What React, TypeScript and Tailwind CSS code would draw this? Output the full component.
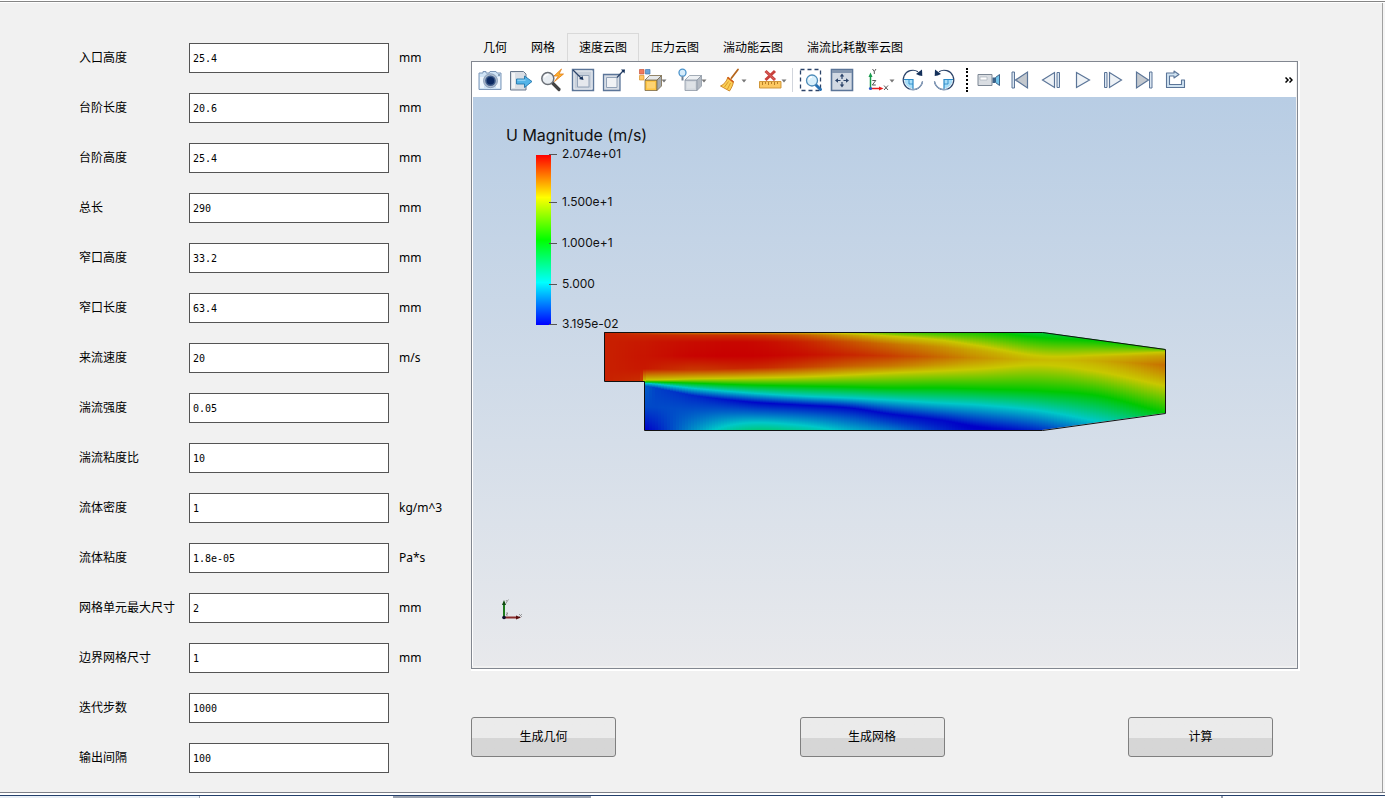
import { useState } from "react";
import type { ReactNode } from "react";
import clsx from "clsx";

const fields = [
  { id: "inlet-height", label: "入口高度", value: "25.4", unit: "mm" },
  { id: "step-length", label: "台阶长度", value: "20.6", unit: "mm" },
  { id: "step-height", label: "台阶高度", value: "25.4", unit: "mm" },
  { id: "total-length", label: "总长", value: "290", unit: "mm" },
  { id: "throat-height", label: "窄口高度", value: "33.2", unit: "mm" },
  { id: "throat-length", label: "窄口长度", value: "63.4", unit: "mm" },
  { id: "velocity", label: "来流速度", value: "20", unit: "m/s" },
  { id: "intensity", label: "湍流强度", value: "0.05", unit: "" },
  { id: "viscosity-ratio", label: "湍流粘度比", value: "10", unit: "" },
  { id: "density", label: "流体密度", value: "1", unit: "kg/m^3" },
  { id: "viscosity", label: "流体粘度", value: "1.8e-05", unit: "Pa*s" },
  { id: "max-cell", label: "网格单元最大尺寸", value: "2", unit: "mm" },
  { id: "boundary-cell", label: "边界网格尺寸", value: "1", unit: "mm" },
  { id: "iterations", label: "迭代步数", value: "1000", unit: "" },
  { id: "interval", label: "输出间隔", value: "100", unit: "" },
];

const tabs = [
  "几何",
  "网格",
  "速度云图",
  "压力云图",
  "湍动能云图",
  "湍流比耗散率云图",
];

const actions = ["生成几何", "生成网格", "计算"];

/* ---------- velocity field ---------- */

type Knot = [y: number, value: number];

// Vertical velocity profiles along the channel, value 0 = min, 1 = max
const stations: { x: number; knots: Knot[] }[] = [
  { x: 0, knots: [[0, 0.96], [3, 0.96], [10, 0.96], [24, 0.96], [37, 0.96], [50, 0.96], [51, 0.5], [52, 0.25], [54, 0.12], [75, 0.1], [99, 0.02]] },
  { x: 37, knots: [[0, 0.91], [3, 0.95], [10, 0.97], [24, 0.975], [37, 0.97], [50, 0.94], [51, 0.5], [52, 0.25], [54, 0.12], [75, 0.09], [99, 0]] },
  { x: 41, knots: [[0, 0.9], [3, 0.95], [10, 0.97], [24, 0.975], [37, 0.97], [48, 0.75], [50, 0.5], [51, 0.25], [54, 0.12], [75, 0.09], [99, 0]] },
  { x: 52, knots: [[0, 0.87], [3, 0.95], [10, 0.975], [24, 0.98], [37, 0.96], [48, 0.75], [50, 0.5], [52, 0.25], [56, 0.08], [75, 0.09], [99, 0.03]] },
  { x: 86, knots: [[0, 0.82], [3, 0.94], [10, 0.985], [24, 0.995], [38, 0.93], [47, 0.75], [51, 0.5], [56, 0.25], [63, 0.05], [78, 0.1], [99, 0.17]] },
  { x: 146, knots: [[0, 0.78], [3, 0.93], [10, 0.99], [24, 1], [36, 0.95], [46, 0.75], [53, 0.5], [61, 0.25], [70, 0.01], [82, 0.14], [99, 0.35]] },
  { x: 196, knots: [[0, 0.75], [3, 0.89], [10, 0.96], [23, 0.985], [35, 0.92], [45, 0.75], [54, 0.5], [64, 0.25], [73, 0.01], [84, 0.14], [99, 0.32]] },
  { x: 246, knots: [[0, 0.68], [3, 0.8], [10, 0.9], [23, 0.955], [34, 0.88], [43, 0.75], [55, 0.5], [66, 0.25], [76, 0.01], [86, 0.11], [99, 0.23]] },
  { x: 286, knots: [[0, 0.57], [4, 0.75], [12, 0.86], [24, 0.925], [34, 0.85], [41, 0.75], [56, 0.5], [68, 0.25], [82, 0.01], [90, 0.08], [99, 0.17]] },
  { x: 336, knots: [[0, 0.53], [8, 0.75], [15, 0.82], [25, 0.87], [33, 0.81], [39, 0.75], [56, 0.5], [71, 0.25], [88, 0.01], [93, 0.03], [99, 0.06]] },
  { x: 376, knots: [[0, 0.51], [14, 0.75], [19, 0.79], [26, 0.82], [31, 0.79], [37, 0.75], [57, 0.5], [73, 0.25], [95, 0], [97, 0], [99, 0.01]] },
  { x: 438, knots: [[0, 0.42], [24, 0.75], [26, 0.76], [28, 0.77], [30, 0.76], [33, 0.75], [59, 0.5], [79, 0.25], [99, 0.05], [101, 0.05], [102, 0.05]] },
  { x: 496, knots: [[8, 0.48], [23, 0.75], [25, 0.77], [29, 0.79], [34, 0.77], [40, 0.75], [64, 0.5], [90, 0.25], [103, 0.15], [105, 0.15], [107, 0.15]] },
  { x: 561, knots: [[16, 0.52], [20, 0.75], [24, 0.8], [33, 0.86], [43, 0.81], [54, 0.75], [81, 0.5], [100, 0.3], [108, 0.2], [110, 0.2], [112, 0.2]] },
];

const COLUMN = 3;
const FIELD_BOTTOM = 100;

const palette = [
  [0, 0, 200],
  [0, 200, 200],
  [0, 200, 0],
  [200, 200, 0],
  [200, 0, 0],
];

function colorOf(value: number) {
  const t = Math.min(Math.max(value, 0), 1) * 4;
  const i = Math.min(Math.floor(t), 3);
  const [r, g, b] = palette[i].map((c, k) =>
    Math.round(c + (palette[i + 1][k] - c) * (t - i))
  );
  return `rgb(${r},${g},${b})`;
}

// Hermite interpolation keeps the isolines smooth downstream of the step;
// the first stations change abruptly and stay linear
function interpolate(x: number, pick: (i: number) => number) {
  let i = 0;
  while (i < stations.length - 2 && x > stations[i + 1].x) i++;
  const h = stations[i + 1].x - stations[i].x;
  const t = (x - stations[i].x) / h;
  if (i < 4) return pick(i) + (pick(i + 1) - pick(i)) * t;
  const slope = (k: number) => {
    const a = Math.max(k - 1, 0);
    const b = Math.min(k + 1, stations.length - 1);
    return (pick(b) - pick(a)) / (stations[b].x - stations[a].x);
  };
  const t2 = t * t;
  const t3 = t2 * t;
  return (
    (2 * t3 - 3 * t2 + 1) * pick(i) +
    (t3 - 2 * t2 + t) * h * slope(i) +
    (3 * t2 - 2 * t3) * pick(i + 1) +
    (t3 - t2) * h * slope(i + 1)
  );
}

function profileAt(x: number): Knot[] {
  const knots = stations[0].knots.map(
    (_, k): Knot => [
      interpolate(x, (i) => stations[i].knots[k][0]),
      interpolate(x, (i) => stations[i].knots[k][1]),
    ]
  );
  // Add a stop wherever a palette colour is crossed between two knots
  const stops: Knot[] = [];
  knots.forEach(([y, v], k) => {
    stops.push([y, v]);
    const next = knots[k + 1];
    if (!next) return;
    const crossed = [0.25, 0.5, 0.75]
      .filter((c) => (c - v) * (c - next[1]) < 0)
      .map((c): Knot => [y + ((c - v) / (next[1] - v)) * (next[0] - y), c]);
    stops.push(...crossed.sort((a, b) => a[0] - b[0]));
  });
  return stops;
}

const columns = Array.from({ length: 187 }, (_, i) => ({
  x: i * COLUMN,
  stops: profileAt(i * COLUMN + COLUMN / 2),
}));

const OUTLINE = "0,0 438,0 561,17 561,81 438,98 40,98 40,49 0,49";

const legend = [
  { y: 58, text: "2.074e+01" },
  { y: 106, text: "1.500e+1" },
  { y: 147, text: "1.000e+1" },
  { y: 188, text: "5.000" },
  { y: 228, text: "3.195e-02" },
];

function FlowView() {
  return (
    <svg
      viewBox="0 0 823 569"
      className="block aspect-[823/569] w-full bg-linear-to-b from-[#b8cde4] to-[#e8e9ec]"
      role="img"
      aria-label="U Magnitude"
    >
      <defs>
        <linearGradient id="scale" x1="0" y1="1" x2="0" y2="0">
          <stop offset="0" stopColor="#0000ff" />
          <stop offset="0.25" stopColor="#00ffff" />
          <stop offset="0.5" stopColor="#00ff00" />
          <stop offset="0.75" stopColor="#ffff00" />
          <stop offset="1" stopColor="#ff0000" />
        </linearGradient>
        <clipPath id="channel">
          <polygon points={OUTLINE} />
        </clipPath>
        {columns.map((col, i) => (
          <linearGradient
            key={i}
            id={`col${i}`}
            gradientUnits="userSpaceOnUse"
            x1="0"
            y1="0"
            x2="0"
            y2={FIELD_BOTTOM}
          >
            {col.stops.map(([y, v], k) => (
              <stop
                key={k}
                offset={Math.min(Math.max(y / FIELD_BOTTOM, 0), 1)}
                stopColor={colorOf(v)}
              />
            ))}
          </linearGradient>
        ))}
      </defs>

      {/* Colour legend */}
      <text x="33" y="44" className="font-['Inter'] text-[16px]" fill="#111">
        U Magnitude (m/s)
      </text>
      <rect x="63" y="58" width="15" height="170" fill="url(#scale)" />
      {legend.map((mark) => (
        <g key={mark.text}>
          <path d={`M76 ${mark.y - 0.5}h8`} stroke="#555" />
          <text
            x="89"
            y={mark.y + 3}
            className="font-['Inter'] text-[12px]"
            fill="#111"
          >
            {mark.text}
          </text>
        </g>
      ))}

      {/* Velocity contour */}
      <g transform="translate(131 235)">
        <g clipPath="url(#channel)" shapeRendering="crispEdges">
          {columns.map((col, i) => (
            <rect
              key={i}
              x={col.x}
              y="0"
              width={COLUMN}
              height={FIELD_BOTTOM}
              fill={`url(#col${i})`}
            />
          ))}
        </g>
        <polygon
          points={OUTLINE}
          transform="translate(0.5 0.5)"
          fill="none"
          stroke="#111"
        />
      </g>

      {/* Orientation marker */}
      <path d="M31 520v-14" stroke="#1c7a1c" strokeWidth="2" />
      <path d="M29 508l2-5 2 5z" fill="#0f4a0f" />
      <path d="M31 520.5h13" stroke="#8a2a2a" strokeWidth="2" />
      <path d="M43 518.500l5 2-5 2z" fill="#5a1010" />
      <circle cx="31" cy="520.5" r="1.8" fill="#101030" />
      <path
        d="M33 503l1 1.500 1.500-2M34 504.500l-1 2M46 517l3 3M49 517l-3 3M33 516h2l-2 2h2"
        fill="none"
        stroke="#888"
        strokeWidth="0.8"
      />
    </svg>
  );
}

/* ---------- toolbar ---------- */

const NAVY = "#2b4369";
const STEEL = "#5b7598";

const Caret = () => <path d="M28.500 11.500h5l-2.500 3z" fill="#777" />;

const Cube = ({ front, top, side, line }: { front: string; top: string; side: string; line: string }) => (
  <g stroke={line} strokeWidth="0.8" strokeLinejoin="round">
    <path d="M12 12h12v10.500H12z" fill={front} />
    <path d="M12 12l4.500-4.500h12L24 12z" fill={top} />
    <path d="M24 12l4.500-4.500V18L24 22.500z" fill={side} />
    <path d="M14 14h8v6.500h-8z" fill="#fff" fillOpacity="0.25" stroke="none" />
  </g>
);

const RotateArc = () => (
  <>
    <path d="M12 12v8.500A8.500 8.500 0 0 1 3.500 12z" fill="#a9def8" />
    <path d="M3 11.500h9V21" fill="none" stroke="#2c8ac8" strokeWidth="1.2" />
    <path d="M8 12v4h4" fill="none" stroke="#2c8ac8" strokeWidth="0.9" />
    <path d="M21.500 13.500A9.700 9.700 0 1 1 17 3.700" fill="none" stroke={NAVY} strokeWidth="1.2" />
    <path d="M21.500 13.500A9.700 9.700 0 0 1 8 20.800" fill="none" stroke="#8aa2bf" strokeWidth="1.3" />
    <path d="M15 6l6-4.500.3 6.500-3-.5z" fill="#14305a" />
  </>
);

const icons: Record<string, ReactNode> = {
  camera: (
    <>
      <path d="M3 5h2V3.500h3V5h3l1-1.500h6L19 5h4v16.500H1V5z" fill="#cfe3f5" stroke="#7d97b8" />
      <path d="M2 9h4v11H2zM18 9h4v11h-4z" fill="#edf5fc" />
      <circle cx="12.5" cy="12.7" r="7" fill="#aab9cd" stroke="#8195b0" strokeWidth="0.8" />
      <circle cx="12.5" cy="12.7" r="5.300" fill="#3f5c8a" />
      <circle cx="12.5" cy="12.7" r="3.800" fill="#0c2a62" />
      <path d="M20 7h2" stroke="#3f5878" />
    </>
  ),
  export: (
    <>
      <path d="M1.500 3.500h13L17 6v16H1.500z" fill="#d9dee5" stroke="#68788d" />
      <path d="M3 5h3v15H3z" fill="#f3f5f7" />
      <path d="M7.500 11h8V8l7.500 5.500-7.500 6V16h-8z" fill="#54b4e8" stroke="#2376ad" strokeWidth="0.9" />
      <path d="M8.500 12.200h8" stroke="#a6dcf8" />
    </>
  ),
  bolt: (
    <>
      <path d="M11.500 14l7.500 7.500" stroke="#444" strokeWidth="3.2" strokeLinecap="round" />
      <circle cx="7.8" cy="10.5" r="6" fill="#e8edf2" stroke="#6a6f76" strokeWidth="1.5" />
      <path d="M4.500 9.500a3.500 3.500 0 0 1 4-3" fill="none" stroke="#fff" strokeWidth="1.5" />
      <path d="M21.500 1l-7.500 7h4.500L14.500 13.500 23.500 6H19z" fill="#ffb52e" stroke="#e07b1b" strokeWidth="0.8" />
    </>
  ),
  shrink: (
    <>
      <path d="M1.500 1.500h21v21h-21z" fill="#c8d0db" stroke={STEEL} strokeWidth="1.4" />
      <path d="M3 3h18v18H3z" fill="none" stroke="#e9edf2" />
      <path d="M6.500 7.500h11.500v11.500H6.500z" fill="#e5e8ed" stroke="#93a3b8" />
      <path d="M2 2l8.500 8.500" stroke={NAVY} strokeWidth="1.2" />
      <path d="M12.500 12l-1-4-3.500 3z" fill="#14305a" />
    </>
  ),
  grow: (
    <>
      <path d="M1.500 6.500h16.500v16H1.500z" fill="#d7dde5" stroke={STEEL} strokeWidth="1.3" />
      <path d="M4.500 9.500h10.500v10H4.500z" fill="#f0f2f5" stroke="#93a3b8" />
      <path d="M15 9.500l6-6.500" stroke={NAVY} strokeWidth="1.2" />
      <path d="M23 1.500h-4l3.500 4z" fill="#14305a" />
    </>
  ),
  colorCube: (
    <>
      <path d="M6.500 1.500h4.500V6H6.500z" fill="#f07a5e" stroke="#c9563e" strokeWidth="0.7" />
      <path d="M12.500 1.500h4.500V6h-4.500z" fill="#6ba3d8" stroke="#4478b0" strokeWidth="0.7" />
      <path d="M6.500 7.500h4.500V12H6.500z" fill="#ffc561" stroke="#d99632" strokeWidth="0.7" />
      <Cube front="#fdc443" top="#e6e8ea" side="#a3a9b0" line="#7a6a48" />
      <Caret />
    </>
  ),
  grayCube: (
    <>
      <Cube front="#d3d8de" top="#edf0f3" side="#b3bac3" line="#8e98a4" />
      <circle cx="9.5" cy="4.7" r="3.5" fill="#d5ecfb" stroke="#4b93cb" strokeWidth="1.3" />
      <path d="M9.500 8.500v4" stroke="#6d7f92" strokeWidth="2" />
      <Caret />
    </>
  ),
  broom: (
    <>
      <path d="M18.500 10l6.500-8.500" stroke="#b5661d" strokeWidth="1.8" strokeLinecap="round" />
      <path d="M15 9l5.500 4.500c-.5 3.500-2 6.500-4 9.500L7.500 18c3.500-1.500 6-4.500 7.500-9z" fill="#fbcf55" stroke="#c97f1c" strokeWidth="0.9" />
      <path d="M14.500 9.500l6 4.800" stroke="#d2551e" strokeWidth="1.4" />
      <path d="M15.500 13.500l-4 5.500M17.500 15l-3 6" stroke="#d18b1c" strokeWidth="0.8" />
      <Caret />
    </>
  ),
  ruler: (
    <>
      <path d="M6.500 13.500h21.500v6.500H6.500z" fill="#fcc862" stroke="#cc8f2c" strokeWidth="0.9" />
      <path d="M9.500 14v3M12.500 14v2M15.500 14v3M18.500 14v2M21.500 14v3M24.500 14v2" stroke="#a66d17" strokeWidth="0.8" />
      <path d="M12.500 3l9.500 9M22 3l-9.500 9" stroke="#c8403c" strokeWidth="3" />
      <path d="M13 3.500l8.500 8" stroke="#dd716d" strokeWidth="0.8" />
      <Caret />
    </>
  ),
  zoomBox: (
    <>
      <path d="M1.500 1.500h20v21h-20z" fill="none" stroke={NAVY} strokeWidth="1.3" strokeDasharray="4 3" />
      <path d="M16.500 16.500l5 5" stroke="#2772b5" strokeWidth="3" strokeLinecap="round" />
      <circle cx="13" cy="12.5" r="5.5" fill="#d8f0fc" stroke="#4c8bb8" strokeWidth="1.3" />
      <path d="M10 12a3 3 0 0 1 3-3" fill="none" stroke="#fff" strokeWidth="1.3" />
    </>
  ),
  fit: (
    <>
      <path d="M1.500 1.500h21v21h-21z" fill="#d2d9e3" stroke={STEEL} strokeWidth="1.6" />
      <path d="M2 2h20v3H2z" fill="#8496af" />
      <path d="M12 8v3M12 14v3M7.500 12.500h3M13.500 12.500h3" stroke={NAVY} strokeWidth="1.2" />
      <path d="M12 5.500l2.200 3H9.800zM12 19.500l2.200-3H9.800zM5 12.500l3-2.200v4.400zM19 12.500l-3-2.200v4.400z" fill={NAVY} />
    </>
  ),
  axes: (
    <>
      <path d="M9.500 20.500V8" stroke="#149a4a" strokeWidth="1.5" />
      <path d="M7.500 9l2-4.500 2 4.500z" fill="#149a4a" />
      <path d="M9.500 20.500H19" stroke="#e81c1c" strokeWidth="1.5" />
      <path d="M18 18.500l4.500 2-4.500 2z" fill="#e81c1c" />
      <circle cx="9.5" cy="20.5" r="1.6" fill="#2a57c8" />
      <path
        d="M11.500 1l1.800 2.500L15 1M13.300 3.500V6M11.300 12.500h3.500l-3.500 4.500h3.500M23 17.500l4 4.500M27 17.500L23 22"
        fill="none"
        stroke="#444"
        strokeWidth="0.9"
      />
      <Caret />
    </>
  ),
  rotateCw: <RotateArc />,
  rotateCcw: (
    <g transform="matrix(-1 0 0 1 24 0)">
      <RotateArc />
    </g>
  ),
  video: (
    <>
      <path d="M1 6.500h14v11H1z" fill="#d9dde2" stroke="#7c8794" />
      <path d="M3 9h7v3H3z" fill="#fff" stroke="#aab2bc" strokeWidth="0.7" />
      <path d="M15.500 9.500h2.500v5.500h-2.500z" fill="#3c6288" />
      <path d="M18.500 9.500L22.500 6.500v11l-4-3z" fill="#72c4ea" stroke="#3c6288" />
    </>
  ),
  first: (
    <>
      <path d="M4 4h2.500v16H4z" fill="#dbe6f1" stroke={STEEL} />
      <path d="M19.500 4v16L7.500 12z" fill="#c3c8ce" stroke={STEEL} strokeWidth="1.2" />
    </>
  ),
  prev: (
    <>
      <path d="M15.500 4.500v15L3.500 12z" fill="#eef2f6" stroke={STEEL} strokeWidth="1.2" />
      <path d="M18 4.500h2.500v15H18z" fill="#dbe6f1" stroke={STEEL} />
    </>
  ),
  play: <path d="M6.500 4.500v15L19.500 12z" fill="#eef2f6" stroke={STEEL} strokeWidth="1.2" />,
  next: (
    <>
      <path d="M3.500 4.500H6v15H3.500z" fill="#dbe6f1" stroke={STEEL} />
      <path d="M8.500 4.500v15L20.500 12z" fill="#eef2f6" stroke={STEEL} strokeWidth="1.2" />
    </>
  ),
  last: (
    <>
      <path d="M4.500 4v16L16.500 12z" fill="#c3c8ce" stroke={STEEL} strokeWidth="1.2" />
      <path d="M17.500 4H20v16h-2.500z" fill="#dbe6f1" stroke={STEEL} />
    </>
  ),
  loop: (
    <path
      d="M3.500 5h7.500V3l5 3.500-5 3.500V8H6.500v8.500h12V12H21.500v7.500h-18z"
      fill="#cfe2f1"
      stroke={STEEL}
      strokeWidth="1.1"
      strokeLinejoin="round"
    />
  ),
};

const wide = ["colorCube", "grayCube", "broom", "ruler", "axes"];

const toolbar = [
  "camera", "export", "bolt", "shrink", "grow",
  "colorCube", "grayCube", "broom", "ruler", "|",
  "zoomBox", "fit", "axes", "rotateCw", "rotateCcw", ":",
  "video", "first", "prev", "play", "next", "last", "loop",
];

function Toolbar() {
  return (
    <div className="flex h-[35px] items-center gap-[7px] bg-white pr-[3px] pl-[5px]">
      {toolbar.map((name) => {
        if (name === "|") {
          return <div key={name} className="-mx-px h-6 w-px shrink-0 bg-gray-300" />;
        }
        if (name === ":") {
          return (
            <div key={name} className="flex h-6 w-[7px] shrink-0 justify-center">
              <div className="border-l-2 border-dotted border-black" />
            </div>
          );
        }
        const w = wide.includes(name) ? 33 : 24;
        return (
          <button key={name} type="button" aria-label={name} className="shrink-0">
            <svg width={w} height="24" viewBox={`0 0 ${w} 24`} className="block overflow-visible">
              {icons[name]}
            </svg>
          </button>
        );
      })}
      <button type="button" aria-label="more" className="ml-auto shrink-0">
        <svg width="8" height="6" viewBox="0 0 8 6" className="block">
          <path d="M0.500 0.500L3 3 0.500 5.500M4.500 0.500L7 3 4.500 5.500" fill="none" stroke="#000" strokeWidth="1.5" />
        </svg>
      </button>
    </div>
  );
}

export default function App() {
  const [active, setActive] = useState("速度云图");

  return (
    <div className="flex min-h-screen flex-col bg-white pt-px font-['Noto_Sans','Noto_Sans_CJK_SC',sans-serif] text-[12px] text-black">
      <div className="flex grow border-t border-[#858585] pt-px">
        <main className="flex grow items-start border-r border-[#a0a0a0] bg-[#f1f1f1] pr-[82px] pb-[18px] pl-[79px]">
          {/* Parameters */}
          <form className="flex w-[392px] shrink-0 flex-col gap-5 pt-10">
            {fields.map((field) => (
              <div key={field.id} className="flex h-[30px] items-center">
                <label htmlFor={field.id} className="w-[110px]">
                  {field.label}
                </label>
                <input
                  id={field.id}
                  defaultValue={field.value}
                  className="h-full w-[200px] border border-[#545454] bg-white px-[3px] font-['DejaVu_Sans_Mono',monospace] text-[10px] outline-none"
                />
                <span className="pl-[10px]">{field.unit}</span>
              </div>
            ))}
          </form>

          {/* Results */}
          <div className="flex min-w-0 grow flex-col pt-[30px]">
            <div role="tablist" className="flex">
              {tabs.map((tab) => (
                <button
                  key={tab}
                  type="button"
                  role="tab"
                  aria-selected={tab === active}
                  onClick={() => setActive(tab)}
                  className={clsx(
                    "h-7 border border-b-0 px-[11px]",
                    tab === active ? "border-[#d9d9d9]" : "border-transparent"
                  )}
                >
                  {tab}
                </button>
              ))}
            </div>
            <div className="border-r-2 border-b-2 border-white">
              <div className="border border-[#828790] bg-[#f1f1f1] pr-px pb-0.5">
                <div className="border-l border-white">
                  <Toolbar />
                  <FlowView />
                </div>
              </div>
            </div>
            <div className="mt-[46px] flex justify-between pr-[27px]">
              {actions.map((action) => (
                <button
                  key={action}
                  type="button"
                  className="h-10 w-[145px] rounded-[3px] border border-[#7f7f7f] bg-linear-to-b from-[#ebebeb] from-52% to-[#d6d6d6] to-52%"
                >
                  {action}
                </button>
              ))}
            </div>
          </div>
        </main>
        <div className="w-0.5 bg-[#f5f5f5]" />
      </div>
      <div className="h-1 border-t border-b border-t-[#7c7f88] border-b-[#24406c] bg-white" />
      <div className="flex h-0.5">
        <div className="w-[200px] border-r border-gray-400 bg-[#e9f0f7]" />
        <div className="grow" />
        <div className="w-[198px] bg-gray-400" />
        <div className="w-[630px]" />
        <div className="w-[164px] border-l-2 border-gray-400" />
      </div>
    </div>
  );
}
